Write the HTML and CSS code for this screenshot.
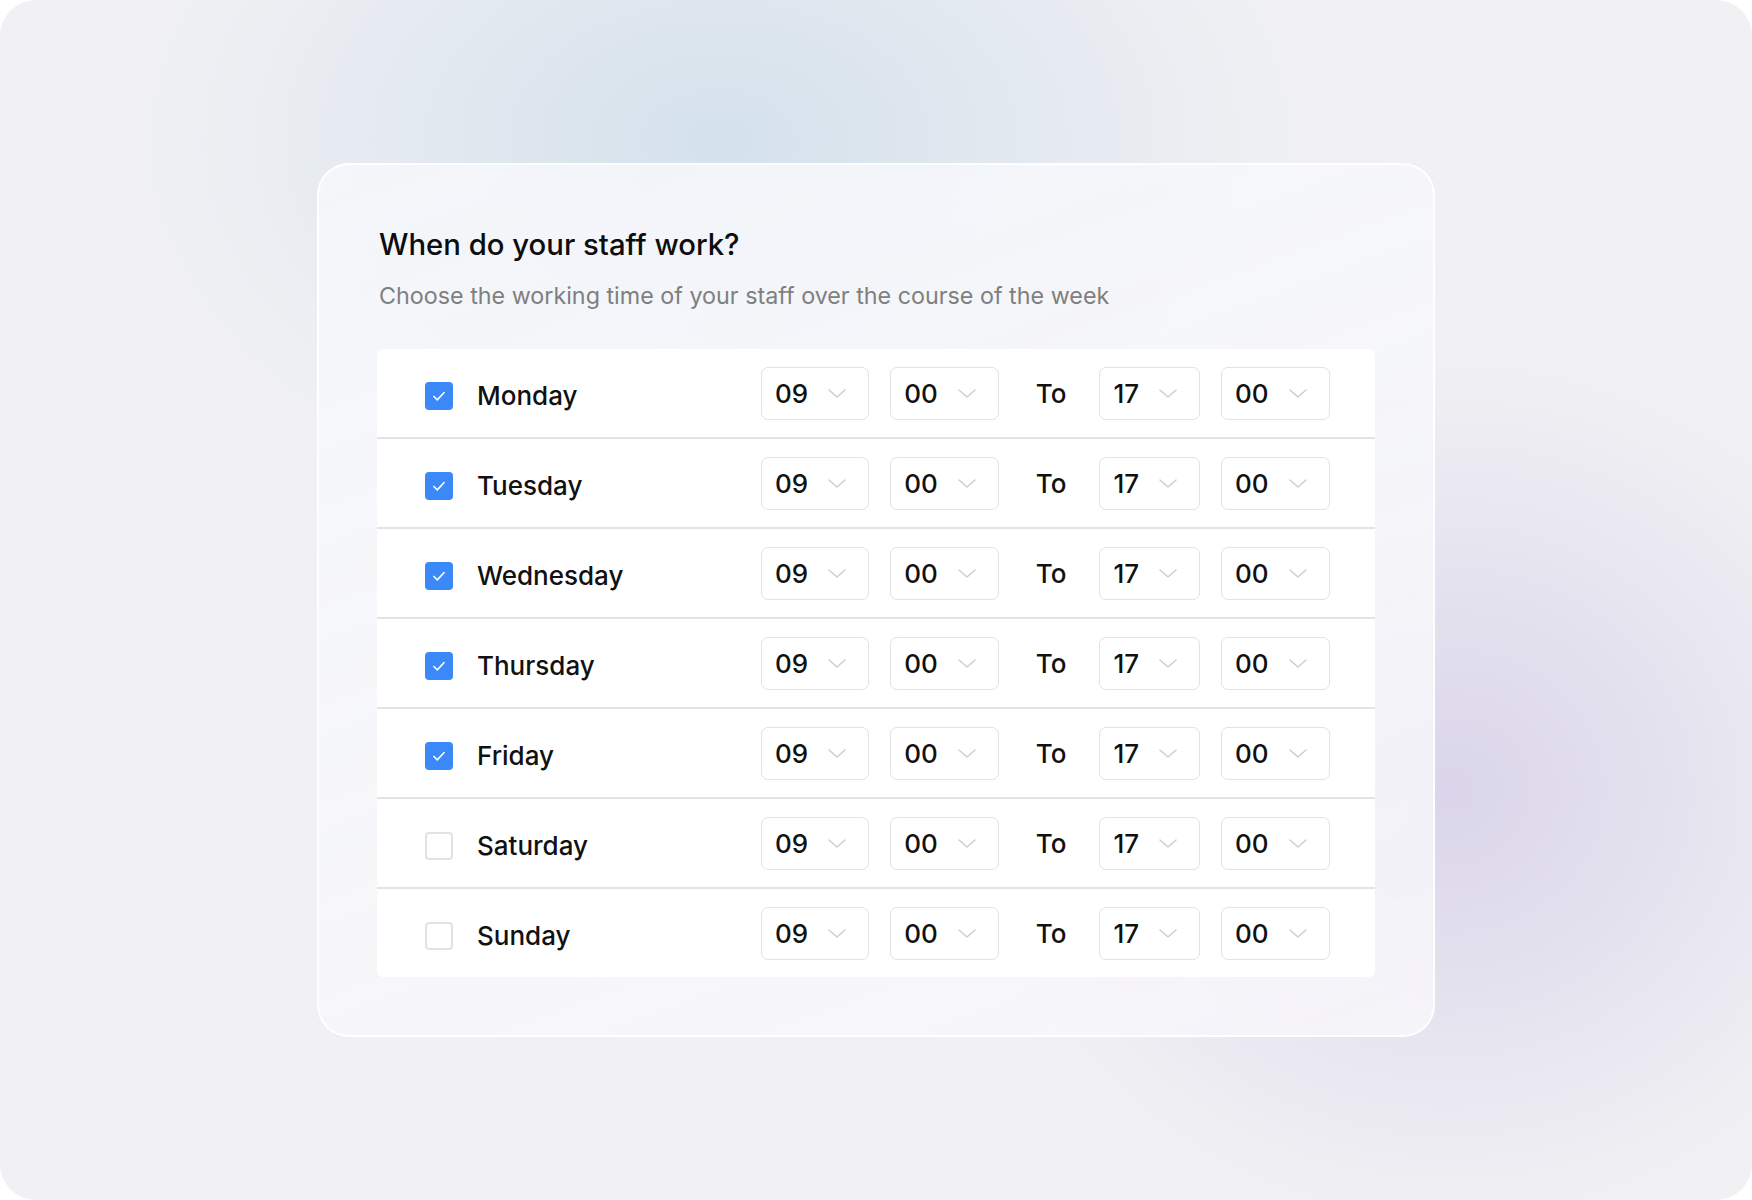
FILE: index.html
```html
<!DOCTYPE html>
<html lang="en">
  <head>
    <meta charset="UTF-8" />
    <meta name="viewport" content="width=device-width, initial-scale=1.0" />
    <title>Working hours</title>
    <link rel="stylesheet" href="styles.css">
  </head>
  <body>
    <div class="frame">
      <main class="card">
        <h1>When do your staff work?</h1>
        <p class="subtitle">Choose the working time of your staff over the course of the week</p>

        <section class="schedule">
          <div class="row">
            <label class="day"><span class="check checked"><svg viewBox="0 0 28 28"><path d="M8 14.5l4 4 8-8.5" /></svg></span>Monday</label>
            <span class="select">09<svg viewBox="0 0 18 9"><path d="M1 1l8 7 8-7" /></svg></span>
            <span class="select">00<svg viewBox="0 0 18 9"><path d="M1 1l8 7 8-7" /></svg></span>
            <span class="to">To</span>
            <span class="select">17<svg viewBox="0 0 18 9"><path d="M1 1l8 7 8-7" /></svg></span>
            <span class="select">00<svg viewBox="0 0 18 9"><path d="M1 1l8 7 8-7" /></svg></span>
          </div>
          <div class="row">
            <label class="day"><span class="check checked"><svg viewBox="0 0 28 28"><path d="M8 14.5l4 4 8-8.5" /></svg></span>Tuesday</label>
            <span class="select">09<svg viewBox="0 0 18 9"><path d="M1 1l8 7 8-7" /></svg></span>
            <span class="select">00<svg viewBox="0 0 18 9"><path d="M1 1l8 7 8-7" /></svg></span>
            <span class="to">To</span>
            <span class="select">17<svg viewBox="0 0 18 9"><path d="M1 1l8 7 8-7" /></svg></span>
            <span class="select">00<svg viewBox="0 0 18 9"><path d="M1 1l8 7 8-7" /></svg></span>
          </div>
          <div class="row">
            <label class="day"><span class="check checked"><svg viewBox="0 0 28 28"><path d="M8 14.5l4 4 8-8.5" /></svg></span>Wednesday</label>
            <span class="select">09<svg viewBox="0 0 18 9"><path d="M1 1l8 7 8-7" /></svg></span>
            <span class="select">00<svg viewBox="0 0 18 9"><path d="M1 1l8 7 8-7" /></svg></span>
            <span class="to">To</span>
            <span class="select">17<svg viewBox="0 0 18 9"><path d="M1 1l8 7 8-7" /></svg></span>
            <span class="select">00<svg viewBox="0 0 18 9"><path d="M1 1l8 7 8-7" /></svg></span>
          </div>
          <div class="row">
            <label class="day"><span class="check checked"><svg viewBox="0 0 28 28"><path d="M8 14.5l4 4 8-8.5" /></svg></span>Thursday</label>
            <span class="select">09<svg viewBox="0 0 18 9"><path d="M1 1l8 7 8-7" /></svg></span>
            <span class="select">00<svg viewBox="0 0 18 9"><path d="M1 1l8 7 8-7" /></svg></span>
            <span class="to">To</span>
            <span class="select">17<svg viewBox="0 0 18 9"><path d="M1 1l8 7 8-7" /></svg></span>
            <span class="select">00<svg viewBox="0 0 18 9"><path d="M1 1l8 7 8-7" /></svg></span>
          </div>
          <div class="row">
            <label class="day"><span class="check checked"><svg viewBox="0 0 28 28"><path d="M8 14.5l4 4 8-8.5" /></svg></span>Friday</label>
            <span class="select">09<svg viewBox="0 0 18 9"><path d="M1 1l8 7 8-7" /></svg></span>
            <span class="select">00<svg viewBox="0 0 18 9"><path d="M1 1l8 7 8-7" /></svg></span>
            <span class="to">To</span>
            <span class="select">17<svg viewBox="0 0 18 9"><path d="M1 1l8 7 8-7" /></svg></span>
            <span class="select">00<svg viewBox="0 0 18 9"><path d="M1 1l8 7 8-7" /></svg></span>
          </div>
          <div class="row">
            <label class="day"><span class="check"></span>Saturday</label>
            <span class="select">09<svg viewBox="0 0 18 9"><path d="M1 1l8 7 8-7" /></svg></span>
            <span class="select">00<svg viewBox="0 0 18 9"><path d="M1 1l8 7 8-7" /></svg></span>
            <span class="to">To</span>
            <span class="select">17<svg viewBox="0 0 18 9"><path d="M1 1l8 7 8-7" /></svg></span>
            <span class="select">00<svg viewBox="0 0 18 9"><path d="M1 1l8 7 8-7" /></svg></span>
          </div>
          <div class="row">
            <label class="day"><span class="check"></span>Sunday</label>
            <span class="select">09<svg viewBox="0 0 18 9"><path d="M1 1l8 7 8-7" /></svg></span>
            <span class="select">00<svg viewBox="0 0 18 9"><path d="M1 1l8 7 8-7" /></svg></span>
            <span class="to">To</span>
            <span class="select">17<svg viewBox="0 0 18 9"><path d="M1 1l8 7 8-7" /></svg></span>
            <span class="select">00<svg viewBox="0 0 18 9"><path d="M1 1l8 7 8-7" /></svg></span>
          </div>
        </section>
      </main>
    </div>
  </body>
</html>
```

FILE: styles.css
```css
body {
  margin: 0;
  background-color: #fff;
  font-family: Inter, "Noto Sans", sans-serif;
  color: #111;
}

.frame {
  width: 1752px;
  height: 1200px;
  border-radius: 36px;
  overflow: hidden;
  display: flex;
  align-items: center;
  justify-content: center;
  background-color: #f1f1f4;
  background-image:
    radial-gradient(ellipse 600px 400px at 720px 140px, #d4e1ec 0%, rgba(212, 225, 236, 0) 100%),
    radial-gradient(ellipse 480px 440px at 1450px 790px, #dad5ea 0%, rgba(218, 213, 234, 0) 100%);
}

.card {
  box-sizing: border-box;
  width: 1118px;
  padding: 62px 58px 58px 60px;
  border: 2px solid rgba(255, 255, 255, 0.95);
  border-radius: 32px;
  background: linear-gradient(160deg, rgba(246, 248, 251, 0.85), rgba(248, 247, 251, 0.8));
}

h1 {
  margin: 0;
  font-size: 29.3px;
  line-height: 36px;
  font-weight: 500;
  color: #0d0d0d;
}

.subtitle {
  margin: 18px 0 38px;
  font-size: 23.3px;
  line-height: 30px;
  color: #7f7f7f;
}

.schedule {
  margin-left: -2px;
  background-color: #fff;
  border-radius: 6px;
}

.row {
  display: flex;
  align-items: center;
  gap: 21px;
  height: 88px;
  padding-left: 48px;
  border-bottom: 2px solid #e4e4e4;
}

.row:last-child {
  border-bottom: none;
}

.day {
  display: flex;
  align-items: center;
  gap: 24px;
  width: 315px;
  padding-top: 5px;
  font-size: 26px;
  font-weight: 500;
}

.check {
  box-sizing: border-box;
  display: flex;
  width: 28px;
  height: 28px;
  border: 2px solid #e2e2e2;
  border-radius: 4px;
  background-color: #fff;
}

.check.checked {
  border-color: #3b89f8;
  background-color: #3b89f8;
}

.check svg {
  width: 24px;
  height: 24px;
  fill: none;
  stroke: #fff;
  stroke-width: 1.8;
  stroke-linecap: round;
  stroke-linejoin: round;
}

.select {
  box-sizing: border-box;
  display: flex;
  align-items: center;
  gap: 20px;
  height: 53px;
  padding: 0 22px 0 13px;
  border: 1.5px solid #e2e2e2;
  border-radius: 7px;
  font-size: 26px;
  font-weight: 500;
}

.select svg {
  width: 18px;
  height: 9px;
  fill: none;
  stroke: #cfcfcf;
  stroke-width: 1.6;
  stroke-linecap: round;
  stroke-linejoin: round;
}

.to {
  margin: 0 12px 0 16px;
  font-size: 26px;
  font-weight: 500;
}
```
